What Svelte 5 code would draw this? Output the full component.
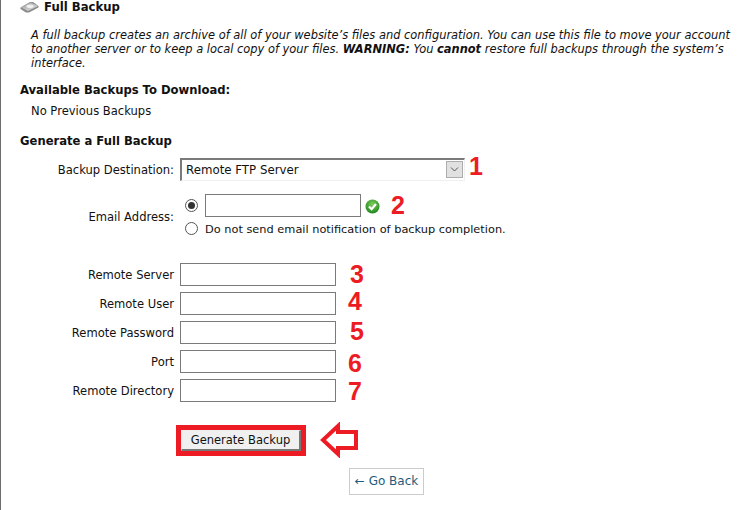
<script>
	// numbers were hand-placed on the shot, so each one sits a little differently
	const fields = [
		{ label: "Remote Server", num: 3, dx: 14, dy: -1 },
		{ label: "Remote User", num: 4, dx: 12, dy: -3 },
		{ label: "Remote Password", num: 5, dx: 14, dy: -2 },
		{ label: "Port", num: 6, dx: 12, dy: 1 },
		{ label: "Remote Directory", num: 7, dx: 12, dy: 0 }
	];
</script>

<div class="page">
	<h3 class="title">
		<svg class="disk" width="19" height="12" viewBox="0 0 19 12">
			<defs>
				<linearGradient id="diskTop" x1="0" y1="0" x2="1" y2="1">
					<stop offset="0" stop-color="#9a9a9a" />
					<stop offset="1" stop-color="#e4e4e4" />
				</linearGradient>
			</defs>
			<path d="M0.5 6.5 L10 1 L13 1 L18.5 5 L18.5 6.5 L9 11.5 L6 11.5 L0.5 8 Z" fill="#8a8a8a" />
			<path d="M1 6.5 L10.5 1.2 L18 5 L8 10 Z" fill="url(#diskTop)" />
			<ellipse cx="10" cy="5.2" rx="3.6" ry="1.8" fill="#f0f0f0" />
		</svg>
		Full Backup
	</h3>

	<p class="intro">A full backup creates an archive of all of your website’s files and configuration. You can use this file to move your account to another server or to keep a local copy of your files. <b>WARNING:</b> You <b>cannot</b> restore full backups through the system’s interface.</p>

	<h4 class="avail">Available Backups To Download:</h4>
	<p class="none">No Previous Backups</p>

	<h4 class="gen">Generate a Full Backup</h4>

	<div class="row dest">
		<span class="label">Backup Destination:</span>
		<div class="select">
			<span class="value">Remote FTP Server</span>
			<span class="arrow">
				<svg width="9" height="5" viewBox="0 0 9 5"><path d="M1 0.5 L4.5 4 L8 0.5" fill="none" stroke="#555" stroke-width="1" /></svg>
			</span>
		</div>
		<span class="num one">1</span>
	</div>

	<div class="row email">
		<span class="label">Email Address:</span>
		<div class="email-opts">
			<div class="opt">
				<span class="radio on"></span>
				<span class="input"></span>
				<svg class="ok" width="15" height="15" viewBox="0 0 15 15">
					<defs>
						<radialGradient id="okFill" cx="0.5" cy="0.35" r="0.7">
							<stop offset="0" stop-color="#7fd05a" />
							<stop offset="1" stop-color="#17801a" />
						</radialGradient>
					</defs>
					<circle cx="7.5" cy="7.5" r="7" fill="url(#okFill)" />
					<path d="M4 7.5 L6.6 10.2 L11 5" fill="none" stroke="#fff" stroke-width="2.2" />
				</svg>
				<span class="num two">2</span>
			</div>
			<div class="opt second">
				<span class="radio"></span>
				<span class="no-mail">Do not send email notification of backup completion.</span>
			</div>
		</div>
	</div>

	<div class="fields">
		{#each fields as f}
			<div class="row field">
				<span class="label">{f.label}</span>
				<span class="input"></span>
				<span class="num" style="margin-left:{f.dx}px;transform:translateY({f.dy}px)">{f.num}</span>
			</div>
		{/each}
	</div>

	<div class="submit">
		<div class="btn-mark"><button>Generate Backup</button></div>
		<svg width="40" height="36" viewBox="0 0 40 36">
			<path d="M4 18 L19 4 L19 10 L37 10 L37 26 L19 26 L19 32 Z" fill="#fff" stroke="#ed1c24" stroke-width="4" />
		</svg>
	</div>

	<div class="back-wrap"><a class="back" href="#back">← Go Back</a></div>
</div>

<style>
	:global(body) {
		margin: 0;
		background: #fff;
	}

	.page {
		height: 510px;
		box-sizing: border-box;
		overflow: hidden;
		border-left: 1px solid #6d6d6d;
		padding-left: 19px;
		font-family: "DejaVu Sans", Verdana, sans-serif;
		font-size: 11.55px;
		color: #111;
	}

	.title {
		display: flex;
		align-items: center;
		gap: 5px;
		margin: 0;
		height: 14px;
		font-size: 11.7px;
	}

	.intro {
		margin: 14px 0 0 11px;
		width: 702px;
		line-height: 14px;
		font-size: 11.43px;
		font-style: italic;
	}

	.avail {
		margin: 13px 0 0;
		font-size: 11.6px;
		line-height: 14px;
	}

	.none {
		margin: 7px 0 0 11px;
		line-height: 14px;
	}

	.gen {
		margin: 16px 0 0;
		font-size: 11.6px;
		line-height: 14px;
	}

	.row {
		display: flex;
		align-items: center;
	}

	.label {
		width: 154px;
		padding-top: 1px;
		text-align: right;
		margin-right: 6px;
		flex: none;
	}

	.dest {
		margin-top: 9px;
		height: 24px;
	}

	.select {
		display: flex;
		align-items: center;
		justify-content: space-between;
		box-sizing: border-box;
		width: 285px;
		height: 23px;
		padding: 0 1px 0 4px;
		border-top: 2px solid #7a7a7a;
		border-left: 2px solid #7a7a7a;
		border-right: 1px solid #f0f0f0;
		border-bottom: 1px solid #f0f0f0;
		font-size: 11.8px;
	}

	.value {
		padding-top: 1px;
	}

	.arrow {
		display: flex;
		align-items: center;
		justify-content: center;
		box-sizing: border-box;
		width: 17px;
		height: 17px;
		background: #e1e1e1;
		border: 1px solid #adadad;
	}

	.num {
		font-family: "Liberation Sans", Arial, sans-serif;
		font-size: 25px;
		font-weight: bold;
		color: #ed1c24;
		line-height: 24px;
	}

	.num.one {
		margin-left: 4px;
		transform: translateY(-3px);
	}

	.email {
		margin-top: 12px;
	}

	.email-opts {
		display: flex;
		flex-direction: column;
	}

	.opt {
		display: flex;
		align-items: center;
		height: 24px;
	}

	.opt.second {
		height: 22px;
		font-size: 11.35px;
	}

	.no-mail {
		padding-top: 1px;
	}

	.radio {
		box-sizing: border-box;
		width: 13px;
		height: 13px;
		margin-left: 5px;
		margin-right: 7px;
		border: 1px solid #555;
		border-radius: 50%;
		background: #fff;
		position: relative;
		flex: none;
	}

	.radio.on::after {
		content: "";
		position: absolute;
		inset: 2px;
		border-radius: 50%;
		background: #333;
	}

	.input {
		display: block;
		box-sizing: border-box;
		width: 156px;
		height: 23px;
		border: 1px solid #7a7a7a;
		background: #fff;
		flex: none;
	}

	.ok {
		margin: 3px 0 0 4px;
	}

	.num.two {
		margin-left: 11px;
	}

	.fields {
		margin-top: 24px;
		display: flex;
		flex-direction: column;
		gap: 6px;
	}

	.field {
		height: 23px;
	}

	.submit {
		display: flex;
		align-items: center;
		gap: 13px;
		margin: 20px 0 0 156px;
	}

	.btn-mark {
		border: 5px solid #ed1c24;
		padding: 0;
		display: flex;
	}

	button {
		width: 120px;
		height: 21px;
		box-sizing: border-box;
		background: #f0f0f0;
		border: 1px solid #eee;
		border-right: 2px solid #777;
		border-bottom: 2px solid #777;
		font-family: inherit;
		font-size: 11.5px;
		color: #111;
		padding: 1px 0 0;
	}

	.back-wrap {
		margin: 10px 0 0 329px;
	}

	.back {
		display: inline-block;
		box-sizing: border-box;
		height: 27px;
		width: 75px;
		line-height: 25px;
		font-size: 12px;
		text-align: center;
		border: 1px solid #ccc;
		color: #1d5c7a;
		text-decoration: none;
	}
</style>
